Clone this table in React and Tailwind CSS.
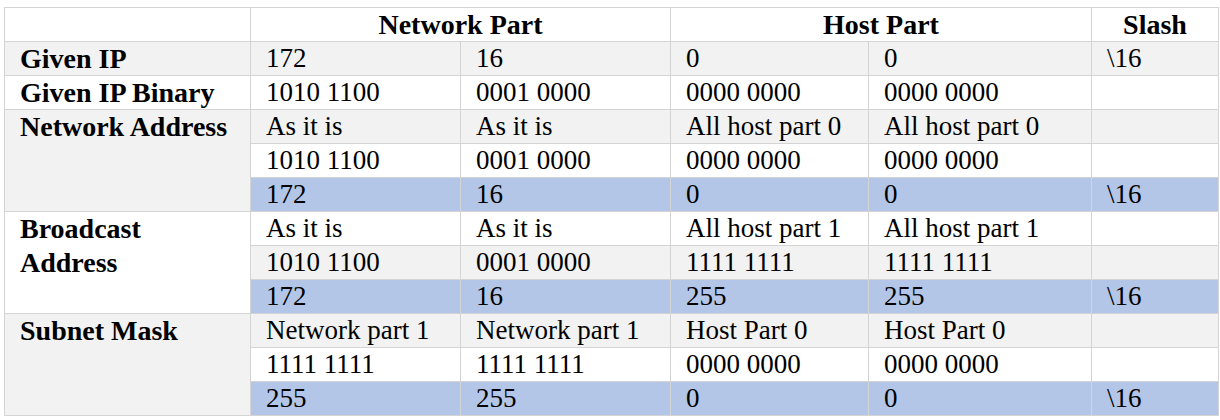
import React from "react";

const GRAY = "bg-[#f2f2f2]";
const WHITE = "bg-white";
const BLUE = "bg-[#b4c6e7]";

const base = "border border-[#d4d4d4] px-[15px] py-0 align-top whitespace-nowrap";
const cell = `${base} leading-[33px] text-left text-[27px] font-normal`;
const head = `${base} leading-[33px] text-center text-[28px] font-bold`;
const label = `${base} leading-[33px] text-left text-[28px] font-bold`;
const label2 = `${base} leading-[34px] text-left text-[28px] font-bold`;

function Row({ bg, values, labelCell }) {
  return (
    <tr>
      {labelCell}
      {values.map((v, i) => (
        <td key={i} className={`${cell} ${bg}`}>
          {v}
        </td>
      ))}
    </tr>
  );
}

export default function App() {
  return (
    <div
      className="w-[1220px] h-[420px] bg-white pt-[7px] pl-[4px] overflow-hidden"
      style={{ fontFamily: '"Liberation Serif", "Times New Roman", serif' }}
    >
      <table className="border-collapse table-fixed w-[1214px] text-black">
        <colgroup>
          <col className="w-[246px]" />
          <col className="w-[210px]" />
          <col className="w-[210px]" />
          <col className="w-[198px]" />
          <col className="w-[223px]" />
          <col className="w-[127px]" />
        </colgroup>
        <thead>
          <tr>
            <th className={`${head} ${WHITE}`}></th>
            <th colSpan={2} className={`${head} ${WHITE}`}>Network Part</th>
            <th colSpan={2} className={`${head} ${WHITE}`}>Host Part</th>
            <th className={`${head} ${WHITE}`}>Slash</th>
          </tr>
        </thead>
        <tbody>
          <Row
            bg={GRAY}
            labelCell={<td className={`${label} ${GRAY}`}>Given IP</td>}
            values={["172", "16", "0", "0", "\\16"]}
          />
          <Row
            bg={WHITE}
            labelCell={<td className={`${label} ${WHITE}`}>Given IP Binary</td>}
            values={["1010 1100", "0001 0000", "0000 0000", "0000 0000", ""]}
          />
          <Row
            bg={GRAY}
            labelCell={<td rowSpan={3} className={`${label} ${GRAY}`}>Network Address</td>}
            values={["As it is", "As it is", "All host part 0", "All host part 0", ""]}
          />
          <Row bg={WHITE} values={["1010 1100", "0001 0000", "0000 0000", "0000 0000", ""]} />
          <Row bg={BLUE} values={["172", "16", "0", "0", "\\16"]} />
          <Row
            bg={WHITE}
            labelCell={
              <td rowSpan={3} className={`${label2} ${WHITE}`}>
                Broadcast
                <br />
                Address
              </td>
            }
            values={["As it is", "As it is", "All host part 1", "All host part 1", ""]}
          />
          <Row bg={GRAY} values={["1010 1100", "0001 0000", "1111 1111", "1111 1111", ""]} />
          <Row bg={BLUE} values={["172", "16", "255", "255", "\\16"]} />
          <Row
            bg={GRAY}
            labelCell={<td rowSpan={3} className={`${label} ${GRAY}`}>Subnet Mask</td>}
            values={["Network part 1", "Network part 1", "Host Part 0", "Host Part 0", ""]}
          />
          <Row bg={WHITE} values={["1111 1111", "1111 1111", "0000 0000", "0000 0000", ""]} />
          <Row bg={BLUE} values={["255", "255", "0", "0", "\\16"]} />
        </tbody>
      </table>
    </div>
  );
}
